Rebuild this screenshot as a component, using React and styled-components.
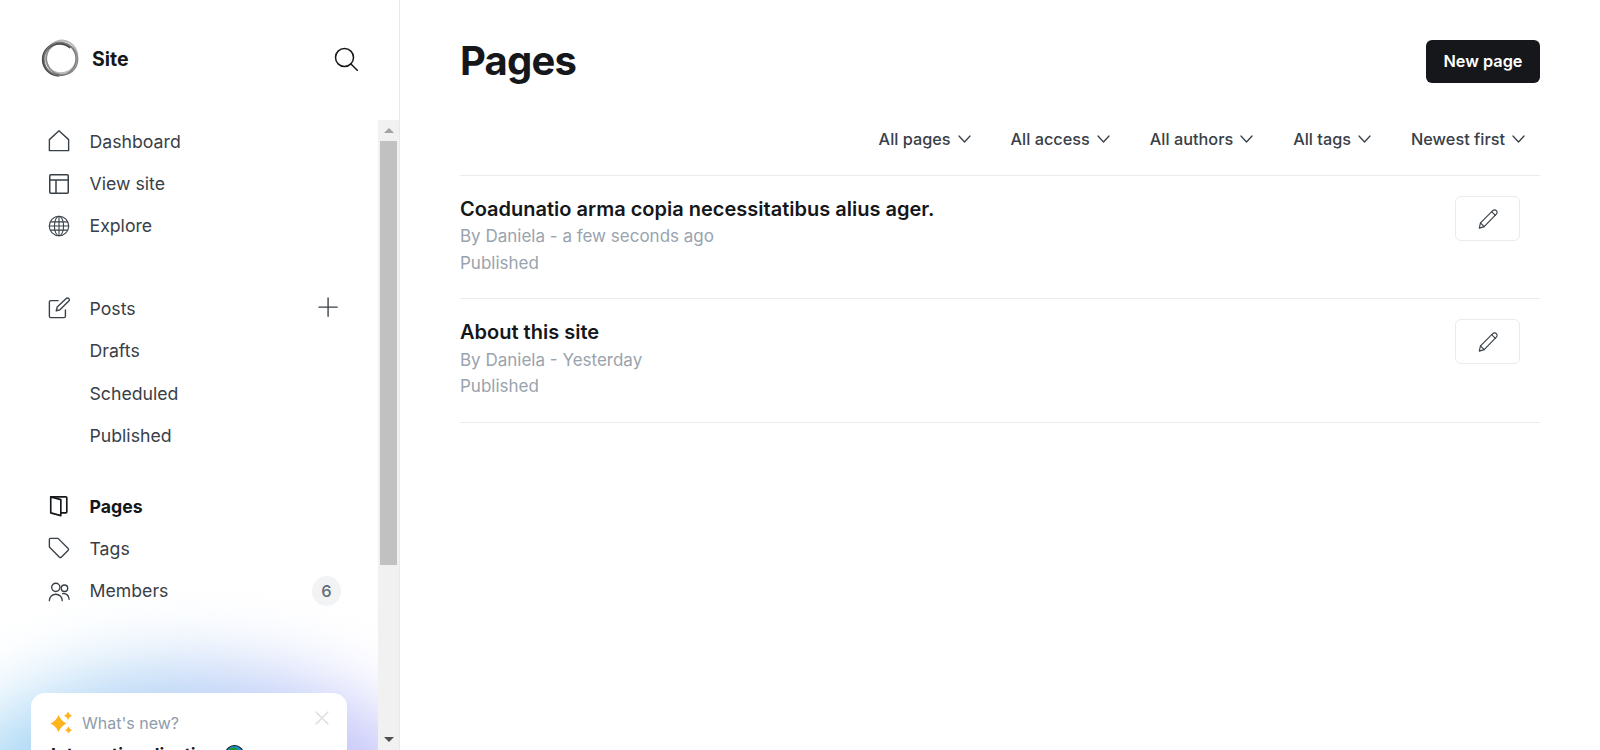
import styled, { createGlobalStyle } from "styled-components";

const GlobalStyle = createGlobalStyle`
  html, body {
    margin: 0;
    height: 100%;
    overflow: hidden;
    background: #ffffff;
    font-family: Inter, "Liberation Sans", sans-serif;
  }
  * { box-sizing: border-box; }
`;

const Icon = ({ children, size = 24, stroke = "#394047", width = 1.5, viewBox = "0 0 24 24" }) => (
  <svg width={size} height={size} viewBox={viewBox} fill="none" stroke={stroke} strokeWidth={width} strokeLinecap="round" strokeLinejoin="round">
    {children}
  </svg>
);

const HomeIcon = () => (
  <Icon size={22}>
    <path d="M1.5 22.5h21V10.500L12 .9 1.5 10.500z" />
  </Icon>
);
const LayoutIcon = () => (
  <Icon size={20} viewBox="0 0 20 20">
    <rect x=".75" y=".75" width="18.500" height="18.500" rx="1" />
    <path d="M.75 6h18.500M7 6v13.250" />
  </Icon>
);
const GlobeIcon = () => (
  <Icon size={22} width={1.2}>
    <circle cx="12" cy="12" r="10.600" />
    <ellipse cx="12" cy="12" rx="5" ry="10.600" />
    <path d="M12 1.400v21.200M2.800 7.500h18.400M2.800 16.500h18.400M1.400 12h21.200" />
  </Icon>
);
const PostIcon = () => (
  <Icon size={22}>
    <path d="M11 4H3a1.500 1.500 0 0 0-1.500 1.500v15.500A1.500 1.500 0 0 0 3 22.500h14.500a1.500 1.500 0 0 0 1.500-1.500v-7" />
    <path d="M20.500 1.200a2 2 0 0 1 2.500 2.800L13 14l-4 1 1-4z" />
  </Icon>
);
const PageIcon = () => (
  <Icon size={22} stroke="#15171a" width={1.8}>
    <path d="M3 2v17.500l11 3V5z" />
    <path d="M3 2h16.500a1 1 0 0 1 1 1v15.500a1 1 0 0 1-1 1H14" />
  </Icon>
);
const TagIcon = () => (
  <Icon size={22}>
    <path d="M2.500 1.500h8.500l11 11a1.500 1.500 0 0 1 0 2l-7.500 7.500a1.500 1.500 0 0 1-2 0L1.500 11V2.500a1 1 0 0 1 1-1z" />
  </Icon>
);
const MembersIcon = () => (
  <Icon size={22}>
    <circle cx="8.500" cy="8" r="4.500" />
    <circle cx="18" cy="9" r="3.500" />
    <path d="M1.500 22.500a7 7 0 0 1 14 0M16 14.800a6 6 0 0 1 7 6.200" />
  </Icon>
);
const SearchIcon = () => (
  <Icon size={24} stroke="#15171a">
    <circle cx="10.500" cy="10.500" r="9" />
    <path d="M17 17l6.500 6.500" />
  </Icon>
);
const PlusIcon = () => (
  <Icon size={22}>
    <path d="M11 1v20M1 11h20" />
  </Icon>
);
const PencilIcon = () => (
  <Icon size={22} width={1.25}>
    <path d="M2.500 22 3.800 16.200 17.200 2.800a2.600 2.600 0 0 1 3.900 3.900L7.800 20.300z" />
    <path d="M3.800 16.200l4 4.100M16 4l4 4" />
  </Icon>
);
const Chevron = () => (
  <svg width="13" height="8" viewBox="0 0 13 8" fill="none" stroke="#394047" strokeWidth="1.300" strokeLinecap="round" strokeLinejoin="round">
    <path d="M1 1l5.500 6L12 1" />
  </svg>
);
const Sparkles = () => (
  <svg width="24" height="24" viewBox="0 0 24 24" fill="#ffb41f">
    <path d="M8.500 4Q11 10 16.500 12.500Q11 15 8.500 21Q6 15 .5 12.500Q6 10 8.500 4z" />
    <path d="M18 .5Q19 3.800 22 4.800Q19 5.800 18 9.100Q17 5.800 14 4.800Q17 3.800 18 .5z" />
    <path d="M18.500 15.500Q19.400 18 22 19Q19.400 20 18.500 22.500Q17.600 20 15 19Q17.600 18 18.500 15.500z" />
  </svg>
);
const Logo = () => (
  <svg width="40" height="40" viewBox="0 0 40 40" fill="none">
    <ellipse cx="21.500" cy="18" rx="15.500" ry="16.500" stroke="#b9b9b9" strokeWidth="2" transform="rotate(25 21.500 18)" />
    <ellipse cx="22" cy="20" rx="15.500" ry="16" stroke="#8c8c8c" strokeWidth="1.500" transform="rotate(-30 22 20)" />
    <ellipse cx="19.500" cy="20.500" rx="16.500" ry="16" stroke="#474747" strokeWidth="2.300" strokeDasharray="62 42" strokeDashoffset="-26" />
    <ellipse cx="20" cy="20" rx="16" ry="16.500" stroke="#777" strokeWidth="1.300" />
  </svg>
);
const Earth = () => (
  <svg width="19" height="19" viewBox="0 0 18 18">
    <circle cx="9" cy="9" r="8.500" fill="#1d8fd6" stroke="#111" strokeWidth="1" />
    <path d="M3 5c3-3 6-3 8-2 1 2-1 3-2 5s-3 3-4 1-1-2-2-4zM11 10c2-1 4-1 5 0 0 3-2 5-4 6-1-2-2-4-1-6z" fill="#1f9a2a" />
  </svg>
);

const Page = styled.div`
  display: flex;
  width: 1600px;
  height: 750px;
  overflow: hidden;
`;

const Sidebar = styled.aside`
  display: flex;
  flex-direction: column;
  flex: 0 0 400px;
  height: 750px;
  border-right: 1px solid #e6e9eb;
`;

const SidebarTop = styled.div`
  display: flex;
  align-items: center;
  justify-content: space-between;
  flex: 0 0 120px;
  padding: 0 41px 2px 40px;
`;

const Brand = styled.div`
  display: flex;
  align-items: center;
  gap: 12px;
  font-size: 19.500px;
  font-weight: 700;
  color: #15171a;
`;

const SidebarBody = styled.div`
  display: flex;
  flex: 1;
  min-height: 0;
`;

const NavArea = styled.nav`
  position: relative;
  flex: 1;
  padding: 0 0 0 48px;
  overflow: hidden;
`;

const NavGroup = styled.ul`
  list-style: none;
  margin: 0 0 ${(p) => p.$gap}px;
  padding: 0;
`;

const NavItem = styled.li`
  display: flex;
  align-items: center;
  height: 42.500px;
  margin-top: -0.1px;
  padding-right: 38px;
  font-size: 17.700px;
  font-weight: ${(p) => (p.$active ? 700 : 400)};
  color: ${(p) => (p.$active ? "#15171a" : "#394047")};
`;

const NavIcon = styled.span`
  display: flex;
  justify-content: center;
  flex: 0 0 41.500px;
  padding-right: 19.500px;
`;

const NavLabel = styled.span`
  flex: 1;
`;

const Badge = styled.span`
  display: flex;
  align-items: center;
  justify-content: center;
  width: 29px;
  height: 30px;
  margin-right: -1px;
  border-radius: 50%;
  background: #f1f3f4;
  color: #626d79;
  font-size: 16.500px;
  font-weight: 500;
`;

const Glow = styled.div`
  position: absolute;
  left: -50px;
  right: -50px;
  top: 546px;
  height: 260px;
  border-radius: 50%;
  background: linear-gradient(90deg, #a9dcf6 0%, #b4d2f5 45%, #cdc3fb 100%);
  filter: blur(36px);
`;

const NewsCard = styled.div`
  position: absolute;
  left: 31px;
  top: 573px;
  width: 316px;
  height: 200px;
  padding: 18px 20px;
  border-radius: 14px;
  background: #ffffff;
`;

const NewsHead = styled.div`
  display: flex;
  align-items: center;
  gap: 8px;
  margin-left: -1px;
  font-size: 16px;
  color: #8e9cac;
`;

const NewsClose = styled.span`
  position: absolute;
  top: 18px;
  right: 18px;
  font-size: 0;
`;

const NewsTitle = styled.div`
  display: flex;
  align-items: center;
  gap: 8px;
  margin-top: 9px;
  font-size: 17.500px;
  font-weight: 700;
  color: #15171a;
`;

const ScrollTrack = styled.div`
  display: flex;
  flex-direction: column;
  flex: 0 0 21px;
  padding: 0 2px;
  background: #f1f1f1;
`;

const ScrollButton = styled.div`
  display: flex;
  align-items: center;
  justify-content: center;
  flex: 0 0 21px;
  &::before {
    content: "";
    border-left: 5px solid transparent;
    border-right: 5px solid transparent;
    ${(p) => (p.$down ? "border-top: 5px solid #505050;" : "border-bottom: 5px solid #a3a3a3;")}
  }
`;

const ScrollThumb = styled.div`
  flex: 0 0 424px;
  background: #c1c1c1;
`;

const ScrollRest = styled.div`
  flex: 1;
`;

const Main = styled.main`
  flex: 1;
  padding: 0 60px 0 60px;
`;

const PageHead = styled.header`
  display: flex;
  align-items: center;
  justify-content: space-between;
  height: 122px;
`;

const Title = styled.h1`
  margin: 0 0 2px;
  font-size: 40px;
  font-weight: 700;
  letter-spacing: -0.8px;
  color: #15171a;
`;

const PrimaryButton = styled.button`
  width: 114px;
  height: 43px;
  border: 0;
  border-radius: 6px;
  background: #15171a;
  color: #ffffff;
  font-family: inherit;
  font-size: 16.300px;
  font-weight: 600;
`;

const Filters = styled.div`
  display: flex;
  align-items: center;
  justify-content: flex-end;
  gap: 40px;
  height: 54px;
  padding-right: 15px;
  padding-bottom: 20px;
  border-bottom: 1px solid #e9ebee;
`;

const Filter = styled.div`
  display: flex;
  align-items: center;
  gap: 7px;
  font-size: 16.300px;
  font-weight: 500;
  color: #394047;
`;

const Row = styled.article`
  display: flex;
  justify-content: space-between;
  height: 123.400px;
  padding: 20px 20px 0 0;
  border-bottom: 1px solid #e9ebee;
`;

const RowText = styled.div`
  display: flex;
  flex-direction: column;
`;

const RowTitle = styled.h2`
  margin: 0 0 1.300px;
  font-size: 20px;
  font-weight: 600;
  line-height: 26px;
  color: #15171a;
`;

const RowMeta = styled.div`
  font-size: 17px;
  line-height: 26.700px;
  color: #99a3ad;
`;

const EditButton = styled.button`
  display: flex;
  align-items: center;
  justify-content: center;
  width: 65px;
  height: 45px;
  padding: 0;
  border: 1px solid #e9ebee;
  border-radius: 6px;
  background: #ffffff;
`;

const topLinks = [
  { label: "Dashboard", icon: <HomeIcon /> },
  { label: "View site", icon: <LayoutIcon /> },
  { label: "Explore", icon: <GlobeIcon /> },
];
const bottomLinks = [
  { label: "Pages", icon: <PageIcon />, active: true },
  { label: "Tags", icon: <TagIcon /> },
  { label: "Members", icon: <MembersIcon />, badge: 6 },
];
const filters = ["All pages", "All access", "All authors", "All tags", "Newest first"];
const pages = [
  { title: "Coadunatio arma copia necessitatibus alius ager.", meta: "By Daniela - a few seconds ago" },
  { title: "About this site", meta: "By Daniela - Yesterday" },
];

const NavRow = ({ icon, label, active, badge, action }) => (
  <NavItem $active={active}>
    <NavIcon>{icon}</NavIcon>
    <NavLabel>{label}</NavLabel>
    {badge && <Badge>{badge}</Badge>}
    {action}
  </NavItem>
);

export default function App() {
  return (
    <Page>
      <GlobalStyle />
      <Sidebar>
        <SidebarTop>
          <Brand>
            <Logo />
            Site
          </Brand>
          <SearchIcon />
        </SidebarTop>
        <SidebarBody>
          <NavArea>
            <NavGroup $gap={40}>
              {topLinks.map((l) => (
                <NavRow key={l.label} {...l} />
              ))}
            </NavGroup>
            <NavGroup $gap={28}>
              <NavRow label="Posts" icon={<PostIcon />} action={<PlusIcon />} />
              <NavRow label="Drafts" />
              <NavRow label="Scheduled" />
              <NavRow label="Published" />
            </NavGroup>
            <NavGroup $gap={0}>
              {bottomLinks.map((l) => (
                <NavRow key={l.label} {...l} />
              ))}
            </NavGroup>
            <Glow />
            <NewsCard>
              <NewsHead>
                <Sparkles />
                What's new?
              </NewsHead>
              <NewsClose>
                <Icon size={14} stroke="#dfe1e4" width={2.800}>
                  <path d="M2 2l20 20M22 2L2 22" />
                </Icon>
              </NewsClose>
              <NewsTitle>
                Internationalization <Earth />
              </NewsTitle>
            </NewsCard>
          </NavArea>
          <ScrollTrack>
            <ScrollButton />
            <ScrollThumb />
            <ScrollRest />
            <ScrollButton $down />
          </ScrollTrack>
        </SidebarBody>
      </Sidebar>
      <Main>
        <PageHead>
          <Title>Pages</Title>
          <PrimaryButton>New page</PrimaryButton>
        </PageHead>
        <Filters>
          {filters.map((f) => (
            <Filter key={f}>
              {f}
              <Chevron />
            </Filter>
          ))}
        </Filters>
        {pages.map((p) => (
          <Row key={p.title}>
            <RowText>
              <RowTitle>{p.title}</RowTitle>
              <RowMeta>{p.meta}</RowMeta>
              <RowMeta>Published</RowMeta>
            </RowText>
            <EditButton>
              <PencilIcon />
            </EditButton>
          </Row>
        ))}
      </Main>
    </Page>
  );
}
